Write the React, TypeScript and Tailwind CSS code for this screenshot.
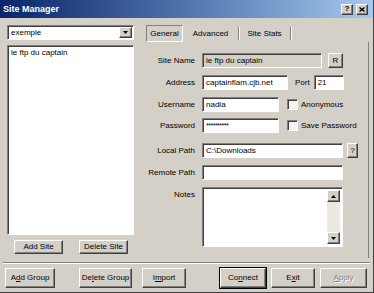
import type { ReactNode } from "react";

const raised =
  "border border-t-white border-l-white border-r-[#404040] border-b-[#404040] shadow-[inset_-1px_-1px_0_#808080]";
const sunken =
  "border border-t-[#808080] border-l-[#808080] border-r-white border-b-white shadow-[inset_1px_1px_0_#404040]";

const Button = ({ className, children }: { className: string; children: ReactNode }) => (
  <div className={`${raised} bg-[#d4d0c8] flex items-center justify-center shrink-0 whitespace-nowrap ${className}`}>
    {children}
  </div>
);

const Field = ({ className, children }: { className: string; children?: ReactNode }) => (
  <div className={`${sunken} h-[15px] flex items-center pl-[3px] shrink-0 whitespace-nowrap ${className}`}>{children}</div>
);

const Label = ({ children }: { children: ReactNode }) => (
  <span className="w-[55px] text-right mr-[7px] shrink-0 whitespace-nowrap">{children}</span>
);

const Check = () => <div className={`${sunken} w-[11px] h-[11px] bg-[#f4f3f0] shrink-0`} />;

const Arrow = ({ up }: { up?: boolean }) => (
  <svg width="5" height="3" viewBox="0 0 5 3">
    <polygon points={up ? "2.5,0 5,3 0,3" : "0,0 5,0 2.5,3"} fill="#000" />
  </svg>
);

export default function App() {
  return (
    <div className="w-[374px] h-[293px] bg-[#d4d0c8] flex flex-col text-[8px] leading-none text-black font-['Liberation_Sans',Arial,sans-serif] border-r border-b border-[#404040] overflow-hidden">
      <div className="h-[18px] shrink-0 flex items-center justify-between pl-[3px] pr-[5px] bg-linear-to-r from-[#0a246a] to-[#a6caf0]">
        <span className="text-white font-bold text-[9px]">Site Manager</span>
        <div className="flex gap-[3px]">
          <Button className="w-[12px] h-[11px] font-bold text-[8px]">?</Button>
          <Button className="w-[12px] h-[11px]">
            <svg width="6" height="5" viewBox="0 0 6 5">
              <path d="M0.5 0.5 L5.5 4.5 M5.5 0.5 L0.5 4.5" stroke="#000" strokeWidth="1.4" />
            </svg>
          </Button>
        </div>
      </div>

      <div className="h-[244px] shrink-0 flex pt-[7px]">
        <div className="ml-[7px] w-[127px] flex flex-col">
          <div className={`${sunken} h-[15px] bg-white flex items-center pl-[3px]`}>
            <span className="flex-1">exemple</span>
            <Button className="w-[13px] h-[11px] mr-[1px]">
              <Arrow />
            </Button>
          </div>
          <div className={`${sunken} h-[190px] mt-[5px] bg-white pl-[3px] pt-[3px]`}>le ftp du captain</div>
          <div className="flex gap-[16px] pl-[7px] mt-[5px]">
            <Button className="w-[49px] h-[14px]">Add Site</Button>
            <Button className="w-[49px] h-[14px]">Delete Site</Button>
          </div>
        </div>

        <div className="ml-[6px] w-[230px] flex flex-col">
          <div className="h-[17px] flex shrink-0">
            <div className="ml-[6px] w-[37px] border border-t-[#808080] border-l-[#808080] border-r-white border-b-white flex items-center justify-center">
              General
            </div>
            <div className="w-[56px] my-[2px] border-r border-r-[#808080] shadow-[1px_0_0_white] flex items-center justify-center">
              Advanced
            </div>
            <div className="w-[52px] my-[2px] border-r border-r-[#808080] shadow-[1px_0_0_white] flex items-center justify-center">
              Site Stats
            </div>
          </div>

          <div className="flex-1 mb-[4px] mr-[1px] border-r border-r-[#808080] flex flex-col pt-[11px]">
            <div className="flex items-center h-[15px]">
              <Label>Site Name</Label>
              <Field className="w-[120px] bg-[#d4d0c8]">le ftp du captain</Field>
              <Button className="ml-[6px] w-[15px] h-[15px]">R</Button>
            </div>
            <div className="flex items-center h-[15px] mt-[7px]">
              <Label>Address</Label>
              <Field className="w-[86px] bg-white">captainflam.cjb.net</Field>
              <span className="ml-[7px] mr-[4px]">Port</span>
              <Field className="w-[30px] bg-white">21</Field>
            </div>
            <div className="flex items-center h-[15px] mt-[7px]">
              <Label>Username</Label>
              <Field className="w-[77px] bg-white">nadia</Field>
              <div className="ml-[8px] mr-[3px]">
                <Check />
              </div>
              <span>Anonymous</span>
            </div>
            <div className="flex items-center h-[15px] mt-[6px]">
              <Label>Password</Label>
              <Field className="w-[77px] bg-white text-[7px] tracking-[-0.5px]">**********</Field>
              <div className="ml-[8px] mr-[3px]">
                <Check />
              </div>
              <span>Save Password</span>
            </div>
            <div className="flex items-center h-[15px] mt-[10px]">
              <Label>Local Path</Label>
              <Field className="w-[141px] bg-white">C:\Downloads</Field>
              <Button className="ml-[4px] w-[11px] h-[15px]">?</Button>
            </div>
            <div className="flex items-center h-[15px] mt-[7px]">
              <Label>Remote Path</Label>
              <Field className="w-[141px] bg-white" />
            </div>
            <div className="flex mt-[7px]">
              <span className="w-[55px] text-right mr-[7px] pt-[4px]">Notes</span>
              <div className={`${sunken} w-[141px] h-[60px] bg-white flex justify-end p-[2px]`}>
                <div className="w-[13px] bg-[#ece9e2] flex flex-col justify-between">
                  <Button className="h-[12px]">
                    <Arrow up />
                  </Button>
                  <Button className="h-[12px]">
                    <Arrow />
                  </Button>
                </div>
              </div>
            </div>
          </div>
        </div>
      </div>

      <div className="mx-[3px] border-t border-t-[#808080] border-b border-b-white" />

      <div className="flex mt-[4px]">
        <Button className="ml-[5px] w-[50px] h-[20px]">
          <span>
            A<u>d</u>d Group
          </span>
        </Button>
        <Button className="ml-[24px] w-[53px] h-[20px]">
          <span>
            De<u>l</u>ete Group
          </span>
        </Button>
        <Button className="ml-[10px] w-[44px] h-[20px]">
          <span>
            I<u>m</u>port
          </span>
        </Button>
        <Button className="ml-[34px] w-[46px] h-[20px] outline outline-black">
          <span>
            Co<u>n</u>nect
          </span>
        </Button>
        <Button className="ml-[5px] w-[44px] h-[20px]">
          <span>
            E<u>x</u>it
          </span>
        </Button>
        <Button className="ml-[5px] w-[47px] h-[20px] text-[#808080] [text-shadow:1px_1px_0_white]">
          <span>
            <u>A</u>pply
          </span>
        </Button>
      </div>
    </div>
  );
}
